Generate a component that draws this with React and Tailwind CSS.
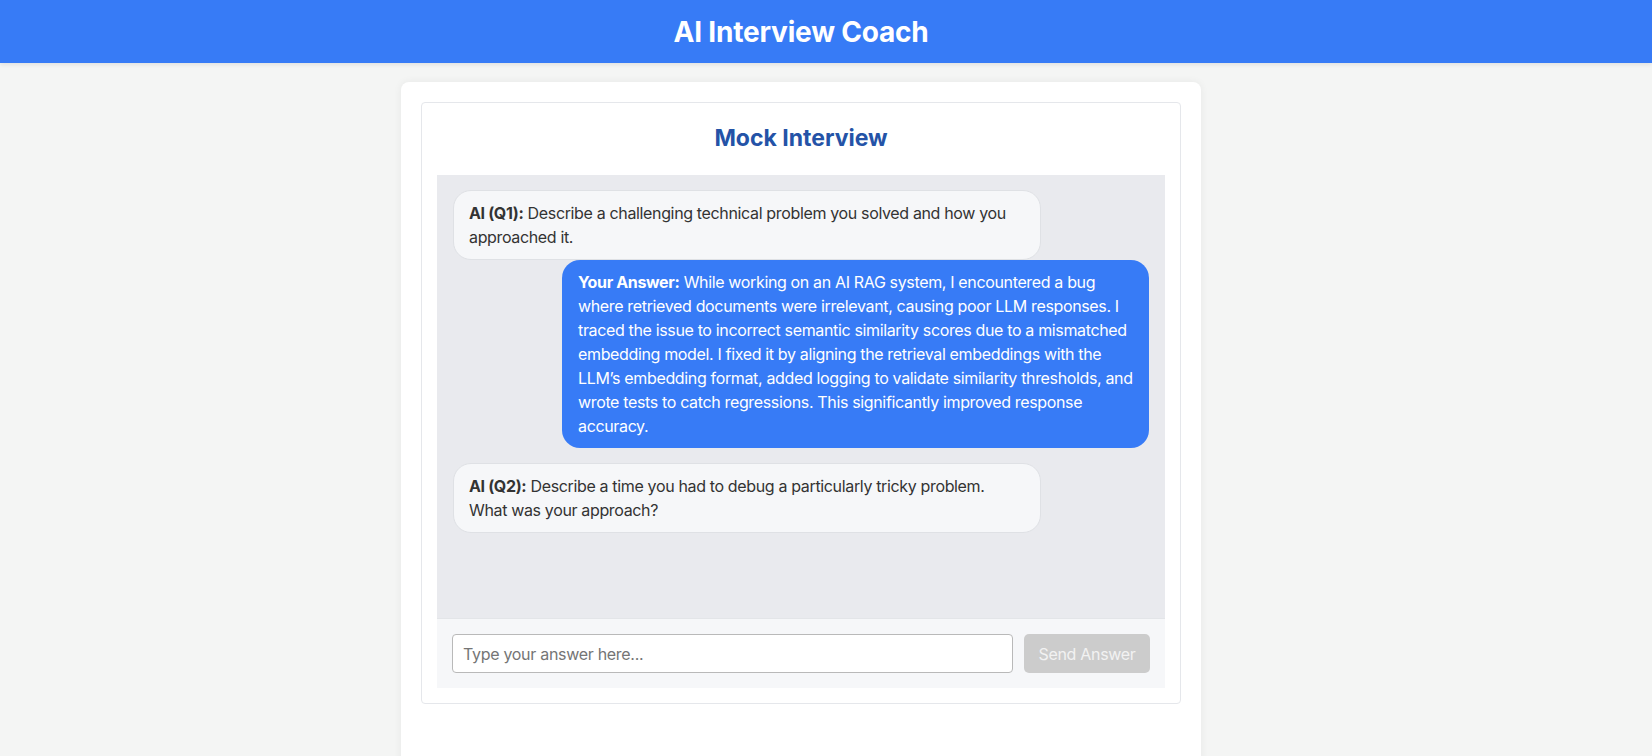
import React, { useState } from 'react';

const messages = [
  {
    from: 'ai',
    label: 'AI (Q1):',
    text: 'Describe a challenging technical problem you solved and how you approached it.',
  },
  {
    from: 'user',
    label: 'Your Answer:',
    text: "While working on an AI RAG system, I encountered a bug where retrieved documents were irrelevant, causing poor LLM responses. I traced the issue to incorrect semantic similarity scores due to a mismatched embedding model. I fixed it by aligning the retrieval embeddings with the LLM’s embedding format, added logging to validate similarity thresholds, and wrote tests to catch regressions. This significantly improved response accuracy.",
  },
  {
    from: 'ai',
    label: 'AI (Q2):',
    text: 'Describe a time you had to debug a particularly tricky problem. What was your approach?',
  },
];

const Bubble = ({ msg }) => {
  if (msg.from === 'user') {
    return (
      <div className="flex justify-end mb-[15px]">
        <div className="w-[587px] rounded-[18px] bg-[#377bf6] px-4 py-[10px] text-base leading-6 tracking-[-0.35px] text-white">
          <strong className="font-bold">{msg.label}</strong> {msg.text}
        </div>
      </div>
    );
  }
  return (
    <div className="flex justify-start">
      <div className="w-[588px] rounded-[18px] border border-[#dfe1e5] bg-[#f6f7f9] px-[15px] py-[10px] text-base leading-6 tracking-[-0.35px] text-[#333]">
        <strong className="font-bold">{msg.label}</strong> {msg.text}
      </div>
    </div>
  );
};

const App = () => {
  const [answer, setAnswer] = useState('');

  return (
    <div className="min-h-screen bg-[#f4f5f4] font-['Inter',sans-serif]">
      <header className="h-[63px] bg-[#377bf6] shadow-[0_2px_4px_rgba(0,0,0,0.08)] pr-[50px] flex items-center justify-center">
        <h1 className="text-[28px] font-bold text-white tracking-[-0.2px]">AI Interview Coach</h1>
      </header>

      <main className="pt-[19px] pr-[50px] flex justify-center">
        <div className="w-[800px] min-h-[700px] rounded-lg bg-white p-5 shadow-[0_0_8px_rgba(0,0,0,0.06)]">
          <div className="rounded border border-[#e5e7eb] p-[15px]">
            <h2 className="mb-[20px] mt-[3px] text-center text-[23px] font-bold leading-[34px] text-[#2453a7]">
              Mock Interview
            </h2>

            <div className="h-[444px] bg-[#e9eaee] px-4 pt-[15px] pb-4 border-b border-[#e3e5e8]">
              {messages.map((m, i) => (
                <Bubble key={i} msg={m} />
              ))}
            </div>

            <div className="flex items-center gap-[11px] bg-[#f6f7f9] p-[15px]">
              <input
                type="text"
                value={answer}
                onChange={(e) => setAnswer(e.target.value)}
                placeholder="Type your answer here..."
                className="h-[39px] flex-1 rounded border border-[#b9b9b9] bg-white px-[10px] text-base tracking-[-0.3px] text-[#333] placeholder:text-[#757575] outline-none"
              />
              <button
                disabled
                className="h-[39px] w-[126px] rounded-[5px] bg-[#cccccc] text-base tracking-[-0.3px] text-[#f2f2f2]"
              >
                Send Answer
              </button>
            </div>
          </div>
        </div>
      </main>
    </div>
  );
};

export default App;
